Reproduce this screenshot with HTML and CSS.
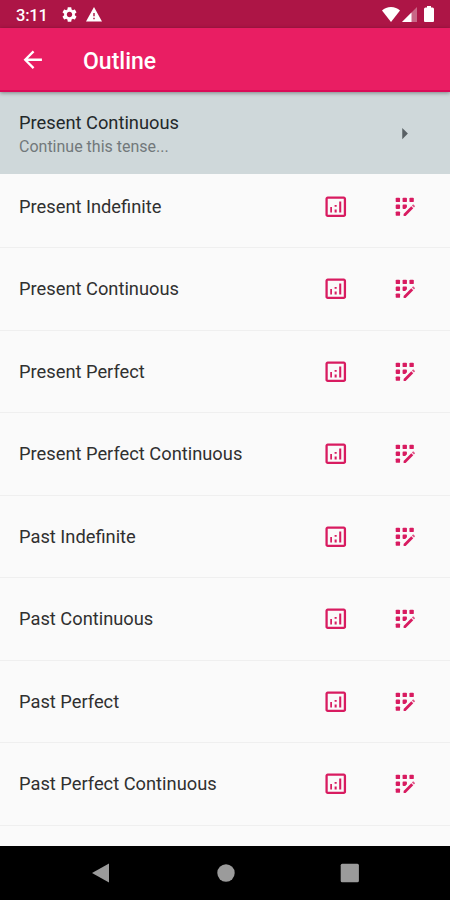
FILE: index.html
```html
<!DOCTYPE html>
<html lang="en">
<head>
    <meta charset="UTF-8">
    <meta name="viewport" content="width=device-width, initial-scale=1.0">
    <title>Outline</title>
    <link rel="stylesheet" href="styles.css">
</head>
<body>
    <svg class="symbols" aria-hidden="true">
        <symbol id="stats" viewBox="0 0 24 24">
            <path d="M19 3H5c-1.1 0-2 .9-2 2v14c0 1.1.9 2 2 2h14c1.1 0 2-.9 2-2V5c0-1.1-.9-2-2-2zm0 16H5V5h14v14z"/>
            <path d="M7.200 12.300h1.500V17H7.200zM15 7.500h1.800V17H15zM11 14.500h1.800V17H11zM11 10.500h1.800v1.600H11z"/>
        </symbol>
        <symbol id="practice" viewBox="0 0 24 24">
            <rect x="4.100" y="4.100" width="3.800" height="3.800" rx=".8"/>
            <rect x="10.100" y="4.100" width="3.800" height="3.800" rx=".8"/>
            <rect x="16.100" y="4.100" width="3.800" height="3.800" rx=".8"/>
            <rect x="4.100" y="10.100" width="3.800" height="3.800" rx=".8"/>
            <rect x="4.100" y="16.100" width="3.800" height="3.800" rx=".8"/>
            <path d="M13.900 12.420V10.900q0-.8-.8-.8h-2.200q-.8 0-.8.800v2.200q0 .8.800.8h1.500zM11 18.25V20h1.75l6.67-6.67-1.75-1.75z"/>
            <path opacity=".75" d="M20.88 11.29l-1.17-1.17c-.16-.16-.42-.16-.58 0l-.88.88L20 12.75l.88-.88c.16-.16.16-.42 0-.58z"/>
        </symbol>
    </svg>

    <div class="status-bar">
        <span class="time">3:11</span>
        <svg class="gear" viewBox="2 2 20 20"><path d="M19.14 12.94c.04-.3.06-.61.06-.94 0-.32-.02-.64-.07-.94l2.03-1.58c.18-.14.23-.41.12-.61l-1.92-3.32c-.12-.22-.37-.29-.59-.22l-2.39.96c-.5-.38-1.03-.7-1.62-.94l-.36-2.54c-.04-.24-.24-.41-.48-.41h-3.84c-.24 0-.43.17-.47.41l-.36 2.54c-.59.24-1.13.57-1.62.94l-2.39-.96c-.22-.08-.47 0-.59.22L2.74 8.87c-.12.21-.08.47.12.61l2.03 1.58c-.05.3-.09.63-.09.94s.02.64.07.94l-2.03 1.58c-.18.14-.23.41-.12.61l1.92 3.32c.12.22.37.29.59.22l2.39-.96c.5.38 1.03.7 1.62.94l.36 2.54c.05.24.24.41.48.41h3.84c.24 0 .44-.17.47-.41l.36-2.54c.59-.24 1.13-.56 1.62-.94l2.39.96c.22.08.47 0 .59-.22l1.92-3.32c.12-.22.07-.47-.12-.61l-2.01-1.58zM12 15.6c-1.98 0-3.6-1.62-3.6-3.6s1.62-3.6 3.6-3.6 3.6 1.62 3.6 3.6-1.62 3.6-3.6 3.6z"/></svg>
        <svg class="warning" viewBox="1 2 22 19" preserveAspectRatio="none"><path d="M1 21h22L12 2 1 21zm12-3h-2v-2h2v2zm0-4h-2v-4h2v4z"/></svg>
        <div class="status-right">
            <svg class="wifi" viewBox="0 0 18 15"><path d="M9 15L0 3.6C2.400 1.400 5.500 0 9 0s6.600 1.400 9 3.600z"/></svg>
            <svg class="signal" viewBox="0 0 15 15"><path class="faded" d="M15 0v15H0z"/><path d="M9.500 5.500V15H0z"/></svg>
            <svg class="battery" viewBox="0 0 10 16"><path d="M3 0h4v1.500h1.500q1.500 0 1.500 1.500v12q0 1-1 1H1q-1 0-1-1V3q0-1.500 1.500-1.500H3z"/></svg>
        </div>
    </div>

    <div class="app-bar">
        <svg class="back" viewBox="0 0 24 24"><path d="M20 11H7.830l5.590-5.590L12 4l-8 8 8 8 1.410-1.410L7.830 13H20v-2z"/></svg>
        <h1>Outline</h1>
    </div>

    <div class="continue">
        <div class="continue-text">
            <div class="continue-title">Present Continuous</div>
            <div class="continue-desc">Continue this tense...</div>
        </div>
        <svg class="caret" viewBox="0 0 24 24"><path d="M10 17l5-5-5-5v10z"/></svg>
    </div>

    <div class="tense-list">
        <div class="tense"><span>Present Indefinite</span><svg><use href="#stats"/></svg><svg><use href="#practice"/></svg></div>
        <div class="tense"><span>Present Continuous</span><svg><use href="#stats"/></svg><svg><use href="#practice"/></svg></div>
        <div class="tense"><span>Present Perfect</span><svg><use href="#stats"/></svg><svg><use href="#practice"/></svg></div>
        <div class="tense"><span>Present Perfect Continuous</span><svg><use href="#stats"/></svg><svg><use href="#practice"/></svg></div>
        <div class="tense"><span>Past Indefinite</span><svg><use href="#stats"/></svg><svg><use href="#practice"/></svg></div>
        <div class="tense"><span>Past Continuous</span><svg><use href="#stats"/></svg><svg><use href="#practice"/></svg></div>
        <div class="tense"><span>Past Perfect</span><svg><use href="#stats"/></svg><svg><use href="#practice"/></svg></div>
        <div class="tense"><span>Past Perfect Continuous</span><svg><use href="#stats"/></svg><svg><use href="#practice"/></svg></div>
    </div>

    <div class="nav-bar">
        <svg viewBox="0 0 20 20"><path d="M0 10L17 .5v19z"/></svg>
        <svg viewBox="0 0 20 20"><circle cx="10" cy="10" r="8.700"/></svg>
        <svg viewBox="0 0 20 20"><rect x=".7" y=".7" width="18.200" height="18.600" rx="1.500"/></svg>
    </div>
</body>
</html>
```
FILE: styles.css
```css
* {
    box-sizing: border-box;
}
body {
    font-family: Roboto, sans-serif;
    margin: 0;
    display: flex;
    flex-direction: column;
    height: 900px;
    overflow: hidden;
    background-color: #fafafa;
    color: #303030;
}
svg {
    display: block;
    flex: none;
    fill: currentColor;
}
.symbols {
    display: none;
}
.status-bar {
    display: flex;
    align-items: center;
    flex: none;
    height: 28px;
    padding: 1px 16px 0 16px;
    background-color: #ad1546;
    color: #fff;
}
.time {
    width: 45.500px;
    padding-top: 1px;
    font-size: 16.500px;
    font-weight: 500;
    letter-spacing: -0.200px;
}
.gear {
    width: 15px;
    height: 15px;
}
.warning {
    width: 16px;
    height: 14.500px;
    margin-left: 9.500px;
}
.status-right {
    display: flex;
    align-items: center;
    margin-left: auto;
}
.wifi {
    width: 18px;
    height: 15px;
    margin-bottom: 1px;
}
.signal {
    width: 15px;
    height: 15px;
    margin: 0 7px 0 2px;
}
.faded {
    opacity: 0.35;
}
.battery {
    width: 10px;
    height: 16px;
    margin-bottom: 1px;
}
.app-bar {
    display: flex;
    align-items: center;
    flex: none;
    position: relative;
    z-index: 2;
    height: 64px;
    padding: 2px 0 0 19px;
    border-bottom: 2px solid #db0b58;
    background-color: #e91e63;
    color: #fff;
    box-shadow: 0 1px 4px rgba(0, 0, 0, 0.4);
}
.back {
    width: 27.500px;
    height: 27.500px;
}
.app-bar h1 {
    margin: 2px 0 0 36.500px;
    font-size: 23px;
    font-weight: 500;
}
.continue {
    display: flex;
    align-items: center;
    justify-content: space-between;
    flex: none;
    position: relative;
    z-index: 1;
    height: 82px;
    padding: 0 32px 0 19px;
    background-color: #cfd8da;
}
.continue-text {
    padding-top: 3px;
}
.continue-title {
    font-size: 18.300px;
    line-height: 24px;
    color: #23282a;
}
.continue-desc {
    font-size: 16px;
    line-height: 24px;
    color: #72787b;
}
.caret {
    width: 27px;
    height: 27px;
    color: #596064;
}
.tense-list {
    flex: 1;
    min-height: 0;
    overflow: hidden;
    margin-top: -8.500px;
}
.tense {
    display: flex;
    align-items: center;
    height: 82.500px;
    padding: 0 31.500px 0 19px;
    border-bottom: 1px solid #efefef;
    font-size: 18.300px;
}
.tense span {
    flex: 1;
}
.tense svg {
    width: 27.500px;
    height: 27.500px;
    color: #d81b60;
}
.tense svg + svg {
    margin-left: 41.500px;
}
.nav-bar {
    display: flex;
    align-items: center;
    justify-content: space-between;
    flex: none;
    height: 54px;
    padding: 0 90.500px 0 91.500px;
    background-color: #000;
    color: #9b9b9b;
}
.nav-bar svg {
    width: 20px;
    height: 20px;
}
```
